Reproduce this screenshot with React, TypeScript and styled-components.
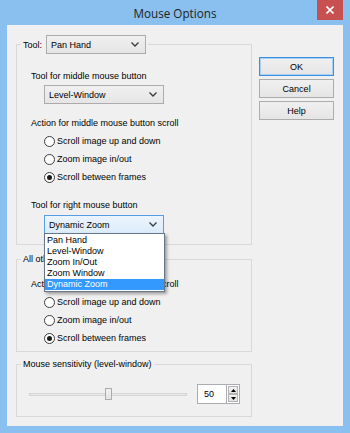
import React from 'react';
import styled, { createGlobalStyle } from 'styled-components';

const GlobalStyle = createGlobalStyle`
  html, body {
    margin: 0;
    padding: 0;
    background: #89c0f0;
  }
  body {
    font-family: "Liberation Sans", Arial, sans-serif;
    font-size: 9px;
    color: #000;
  }
`;

const Frame = styled.div`
  width: 350px;
  height: 433px;
  box-sizing: border-box;
  background: #89c0f0;
  display: flex;
  flex-direction: column;
  padding: 0 7px 7px 7px;
`;

const TitleBar = styled.div`
  height: 25px;
  display: grid;
  grid-template-columns: 1fr auto 1fr;
  align-items: start;
`;

const Title = styled.div`
  grid-column: 2;
  font-family: "Open Sans", "Liberation Sans", sans-serif;
  font-size: 11.7px;
  line-height: 26px;
  color: #1e1e1e;
`;

const CloseButton = styled.div`
  grid-column: 3;
  justify-self: end;
  width: 26px;
  height: 20px;
  background: #c75050;
  display: grid;
  place-items: center;
`;

const Client = styled.div`
  flex: 1;
  background: #f0f0f0;
  display: flex;
  gap: 7px;
  padding: 10px 9px 0 9px;
`;

const LeftColumn = styled.div`
  width: 237px;
  display: flex;
  flex-direction: column;
`;

const RightColumn = styled.div`
  width: 75px;
  display: flex;
  flex-direction: column;
  gap: 3px;
  padding-top: 22px;
`;

const Group = styled.fieldset<{ $top: number; $bottom: number }>`
  margin: ${p => p.$top}px 0 0 0;
  padding: 0 0 ${p => p.$bottom}px 0;
  border: 1px solid #d9d9d9;
  min-width: 0;
`;

const Legend = styled.legend`
  margin-left: 4px;
  padding: 0 2px;
`;

const LegendRow = styled.span`
  display: inline-flex;
  align-items: center;
  gap: 4px;
  line-height: 12px;
`;

const Body = styled.div`
  display: flex;
  flex-direction: column;
  padding-left: 14px;
`;

const Label = styled.div<{ $top: number }>`
  margin-top: ${p => p.$top}px;
  line-height: 12px;
  white-space: nowrap;
`;

const ComboWrap = styled.div<{ $width: number; $indent: number; $top: number }>`
  position: relative;
  width: ${p => p.$width}px;
  margin: ${p => p.$top}px 0 0 ${p => p.$indent}px;
  z-index: 2;
`;

const ComboBox = styled.div<{ $open?: boolean }>`
  height: 19px;
  box-sizing: border-box;
  display: flex;
  align-items: center;
  justify-content: space-between;
  padding: 0 6px 0 4px;
  border: 1px solid ${p => (p.$open ? '#569de5' : '#acacac')};
  background: ${p =>
    p.$open
      ? 'linear-gradient(#ecf4fc, #dcecfc)'
      : 'linear-gradient(#f0f0f0, #e5e5e5)'};
  white-space: nowrap;
`;

const DropList = styled.div`
  position: absolute;
  top: 100%;
  left: 0;
  width: 121px;
  box-sizing: border-box;
  margin-top: -1px;
  border: 1px solid #66768a;
  background: #fff;
  padding: 1px 0;
  box-shadow: 2px 2px 3px rgba(0, 0, 0, 0.35);
`;

const DropItem = styled.div<{ $active?: boolean }>`
  height: 11px;
  line-height: 11px;
  padding-left: 2px;
  background: ${p => (p.$active ? '#3399ff' : 'transparent')};
  color: ${p => (p.$active ? '#fff' : '#000')};
  white-space: nowrap;
`;

const RadioList = styled.div`
  display: flex;
  flex-direction: column;
  margin-top: 3px;
  padding-left: 13px;
`;

const RadioRow = styled.div`
  height: 18px;
  display: flex;
  align-items: center;
  gap: 2px;
  white-space: nowrap;
`;

const RadioCircle = styled.span<{ $checked?: boolean }>`
  width: 11px;
  height: 11px;
  box-sizing: border-box;
  border-radius: 50%;
  border: 1px solid #3c3c3c;
  background: #fff;
  display: grid;
  place-items: center;
  &::after {
    content: '';
    width: 5px;
    height: 5px;
    border-radius: 50%;
    background: ${p => (p.$checked ? '#1a1a1a' : 'transparent')};
  }
`;

const SliderRow = styled.div`
  display: flex;
  align-items: center;
  gap: 10px;
  margin-top: 14px;
  padding-left: 12px;
`;

const Slider = styled.div`
  position: relative;
  width: 158px;
  height: 13px;
  display: flex;
  align-items: center;
`;

const Track = styled.div`
  width: 100%;
  height: 3px;
  box-sizing: border-box;
  border: 1px solid #d6d6d6;
  background: #e7eaea;
`;

const Thumb = styled.div`
  position: absolute;
  top: 0;
  width: 7px;
  height: 12px;
  margin-left: -3px;
  box-sizing: border-box;
  border: 1px solid #acacac;
  background: linear-gradient(#f0f0f0, #e5e5e5);
`;

const Spin = styled.div`
  display: flex;
  height: 20px;
`;

const SpinEdit = styled.div`
  width: 29px;
  box-sizing: border-box;
  border: 1px solid #abadb3;
  border-right: none;
  background: #fff;
  padding-left: 6px;
  display: flex;
  align-items: center;
`;

const SpinButtons = styled.div`
  width: 14px;
  display: flex;
  flex-direction: column;
  border: 1px solid #abadb3;
  box-sizing: border-box;
  background: #fff;
  padding: 1px;
  gap: 0;
`;

const SpinButton = styled.div`
  flex: 1;
  border: 1px solid #b5b5b5;
  background: linear-gradient(#f2f2f2, #e2e2e2);
  display: grid;
  place-items: center;
`;

const Button = styled.div<{ $default?: boolean }>`
  height: 19px;
  box-sizing: border-box;
  border: 1px solid ${p => (p.$default ? '#3c8fe0' : '#acacac')};
  box-shadow: ${p => (p.$default ? 'inset 0 0 0 1px #a9d0f5' : 'none')};
  background: linear-gradient(#f0f0f0, #e5e5e5);
  display: flex;
  align-items: center;
  justify-content: center;
`;

const Chevron = () => (
  <svg width="8" height="5" viewBox="0 0 8 5">
    <polyline points="0.5,0.5 4,4 7.5,0.5" fill="none" stroke="#3a3a3a" strokeWidth="1.3" />
  </svg>
);

const Arrow = ({ up }: { up?: boolean }) => (
  <svg width="5" height="3" viewBox="0 0 5 3">
    <polygon points={up ? '0,3 2.5,0 5,3' : '0,0 2.5,3 5,0'} fill="#000" />
  </svg>
);

const Combo = ({ value, width, indent, top }: { value: string; width: number; indent: number; top: number }) => (
  <ComboWrap $width={width} $indent={indent} $top={top}>
    <ComboBox>
      <span>{value}</span>
      <Chevron />
    </ComboBox>
  </ComboWrap>
);

const scrollActions = ['Scroll image up and down', 'Zoom image in/out', 'Scroll between frames'];
const rightTools = ['Pan Hand', 'Level-Window', 'Zoom In/Out', 'Zoom Window', 'Dynamic Zoom'];

const Radios = ({ checked }: { checked: number }) => (
  <RadioList>
    {scrollActions.map((a, i) => (
      <RadioRow key={a}>
        <RadioCircle $checked={i === checked} />
        {a}
      </RadioRow>
    ))}
  </RadioList>
);

export default function App() {
  const sensitivity = 50;
  return (
    <>
      <GlobalStyle />
      <Frame>
        <TitleBar>
          <Title>Mouse Options</Title>
          <CloseButton>
            <svg width="8" height="8" viewBox="0 0 8 8">
              <path d="M0.5 0.5 L7.5 7.5 M7.5 0.5 L0.5 7.5" stroke="#fff" strokeWidth="1.6" />
            </svg>
          </CloseButton>
        </TitleBar>
        <Client>
          <LeftColumn>
            <Group $top={0} $bottom={10}>
              <Legend>
                <LegendRow>
                  Tool:
                  <ComboWrap $width={100} $indent={0} $top={0}>
                    <ComboBox>
                      <span>Pan Hand</span>
                      <Chevron />
                    </ComboBox>
                  </ComboWrap>
                </LegendRow>
              </Legend>
              <Body>
                <Label $top={16}>Tool for middle mouse button</Label>
                <Combo value="Level-Window" width={120} indent={13} top={3} />
                <Label $top={13}>Action for middle mouse button scroll</Label>
                <Radios checked={2} />
                <Label $top={13}>Tool for right mouse button</Label>
                <ComboWrap $width={120} $indent={13} $top={4}>
                  <ComboBox $open>
                    <span>Dynamic Zoom</span>
                    <Chevron />
                  </ComboBox>
                  <DropList>
                    {rightTools.map(t => (
                      <DropItem key={t} $active={t === 'Dynamic Zoom'}>
                        {t}
                      </DropItem>
                    ))}
                  </DropList>
                </ComboWrap>
              </Body>
            </Group>

            <Group $top={8} $bottom={4}>
              <Legend>
                <LegendRow>All other tools</LegendRow>
              </Legend>
              <Body>
                <Label $top={13}>Action for middle mouse button scroll</Label>
                <Radios checked={2} />
              </Body>
            </Group>

            <Group $top={6} $bottom={12}>
              <Legend>
                <LegendRow>Mouse sensitivity (level-window)</LegendRow>
              </Legend>
              <SliderRow>
                <Slider>
                  <Track />
                  <Thumb style={{ left: `${sensitivity}%` }} />
                </Slider>
                <Spin>
                  <SpinEdit>{sensitivity}</SpinEdit>
                  <SpinButtons>
                    <SpinButton>
                      <Arrow up />
                    </SpinButton>
                    <SpinButton>
                      <Arrow />
                    </SpinButton>
                  </SpinButtons>
                </Spin>
              </SliderRow>
            </Group>
          </LeftColumn>
          <RightColumn>
            <Button $default>OK</Button>
            <Button>Cancel</Button>
            <Button>Help</Button>
          </RightColumn>
        </Client>
      </Frame>
    </>
  );
}
